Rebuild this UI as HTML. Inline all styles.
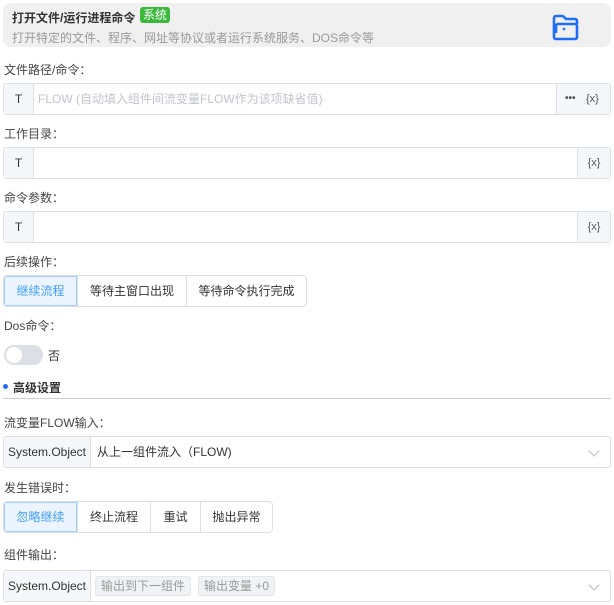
<!DOCTYPE html><html><head><meta charset="utf-8"><style>
*{box-sizing:border-box;margin:0;padding:0}
body{width:614px;height:605px;background:#fff;font-family:"Liberation Sans","Noto Sans CJK SC",sans-serif;font-size:12px;color:#333;position:relative;overflow:hidden}
.a{position:absolute;white-space:nowrap}
.inp{position:absolute;left:3px;width:608px;height:32px;border:1px solid #dcdfe6;border-radius:3px;background:#fff}
.T{position:absolute;left:0;top:0;width:30px;height:30px;background:#f5f7fa;border-right:1px solid #dcdfe6;text-align:center;line-height:30px;font-size:12px;color:#333}
.X{position:absolute;right:0;top:0;width:33px;height:30px;background:#f5f7fa;border-left:1px solid #dcdfe6;text-align:center;line-height:30px;font-size:11px;color:#555}
.grp{position:absolute;left:3px;height:32px;display:flex;border:1px solid #dcdfe6;border-radius:4px;overflow:hidden}
.grp div{height:30px;line-height:30px;text-align:center;border-left:1px solid #dcdfe6;font-size:12px;color:#333;white-space:nowrap}
.grp div:first-child{border-left:none;background:#ecf5ff;color:#409eff;box-shadow:inset 0 0 0 1px #a0cfff}
.pre{position:absolute;left:0;top:0;width:87px;height:30px;background:#f5f7fa;border-right:1px solid #dcdfe6;line-height:30px;text-align:center;font-size:12px;color:#333}
.chev{position:absolute;right:12px;top:10px;width:8px;height:8px;border-right:1px solid #bbb;border-bottom:1px solid #bbb;transform:rotate(45deg)}
.tag{position:absolute;top:5px;height:20px;line-height:18px;background:#f0f2f5;border:1px solid #e4e6ea;border-radius:3px;color:#999;font-size:12px;padding:0 5px;white-space:nowrap}
</style></head><body>
<div class="a" style="left:3px;top:3px;width:608px;height:44px;background:#f0f0f0;border-radius:8px"></div>
<div class="a" style="left:12px;top:9px;font-size:12px;font-weight:bold;color:#333">打开文件/运行进程命令</div>
<div class="a" style="left:140px;top:7px;height:16px;padding:0 3px;background:#3cb93c;color:#fff;border-radius:3px;font-size:12px;line-height:16px">系统</div>
<div class="a" style="left:12px;top:29px;font-size:12px;color:#999">打开特定的文件、程序、网址等协议或者运行系统服务、DOS命令等</div>
<svg class="a" style="left:551px;top:14px" width="30" height="28" viewBox="0 0 30 28"><path d="M3 4 a2 2 0 0 1 2-2 h7 l3 3 h9 a2 2 0 0 1 2 2 v3 M3 4 v19 a2 2 0 0 0 2 2 h19 a2 2 0 0 0 2-2 v-11 a2 2 0 0 0-2-2 h-17 a2 2 0 0 0-2 2 v7" fill="none" stroke="#1e6ff5" stroke-width="2.6" stroke-linejoin="round"/><circle cx="13" cy="15" r="1.3" fill="#1e6ff5"/></svg>
<div class="a" style="left:4px;top:61px;color:#444">文件路径/命令：</div>
<div class="inp" style="top:83px"><div class="T">T</div><div class="a" style="left:34px;top:0;line-height:30px;color:#c0c4cc">FLOW (自动填入组件间流变量FLOW作为该项缺省值)</div><div class="a" style="right:0;top:0;width:54px;height:30px;background:#f5f7fa;border-left:1px solid #dcdfe6;line-height:30px;font-size:11px;color:#555"><b style="position:absolute;left:8px;top:0;font-size:10px">•••</b><span style="position:absolute;left:29px">{x}</span></div></div>
<div class="a" style="left:4px;top:125px;color:#444">工作目录：</div>
<div class="inp" style="top:147px"><div class="T">T</div><div class="X">{x}</div></div>
<div class="a" style="left:4px;top:189px;color:#444">命令参数：</div>
<div class="inp" style="top:211px"><div class="T">T</div><div class="X">{x}</div></div>
<div class="a" style="left:4px;top:253px;color:#444">后续操作：</div>
<div class="grp" style="top:275px"><div style="width:73px">继续流程</div><div style="width:109px">等待主窗口出现</div><div style="width:120px">等待命令执行完成</div></div>
<div class="a" style="left:4px;top:317px;color:#444">Dos命令：</div>
<div class="a" style="left:4px;top:345px;width:39px;height:20px;border-radius:10px;background:#dcdfe6"><div class="a" style="left:2px;top:2px;width:16px;height:16px;border-radius:8px;background:#fff"></div></div>
<div class="a" style="left:48px;top:347px;font-size:12px">否</div>
<div class="a" style="left:3px;top:384px;width:5px;height:5px;border-radius:3px;background:#1e6ff5"></div>
<div class="a" style="left:13px;top:379px;font-size:12px;font-weight:bold;color:#333">高级设置</div>
<div class="a" style="left:3px;top:398px;width:608px;height:1px;background:#d0d0d0"></div>
<div class="a" style="left:4px;top:414px;color:#444">流变量FLOW输入：</div>
<div class="inp" style="top:436px"><div class="pre">System.Object</div><div class="a" style="left:93px;top:0;line-height:30px;color:#333">从上一组件流入（FLOW)</div><div class="chev"></div></div>
<div class="a" style="left:4px;top:479px;color:#444">发生错误时：</div>
<div class="grp" style="top:501px"><div style="width:73px">忽略继续</div><div style="width:73px">终止流程</div><div style="width:50px">重试</div><div style="width:72px">抛出异常</div></div>
<div class="a" style="left:4px;top:546px;color:#444">组件输出：</div>
<div class="inp" style="top:570px"><div class="pre">System.Object</div><div class="tag" style="left:91px">输出到下一组件</div><div class="tag" style="left:194px">输出变量 +0</div><div class="chev"></div></div>
</body></html>
